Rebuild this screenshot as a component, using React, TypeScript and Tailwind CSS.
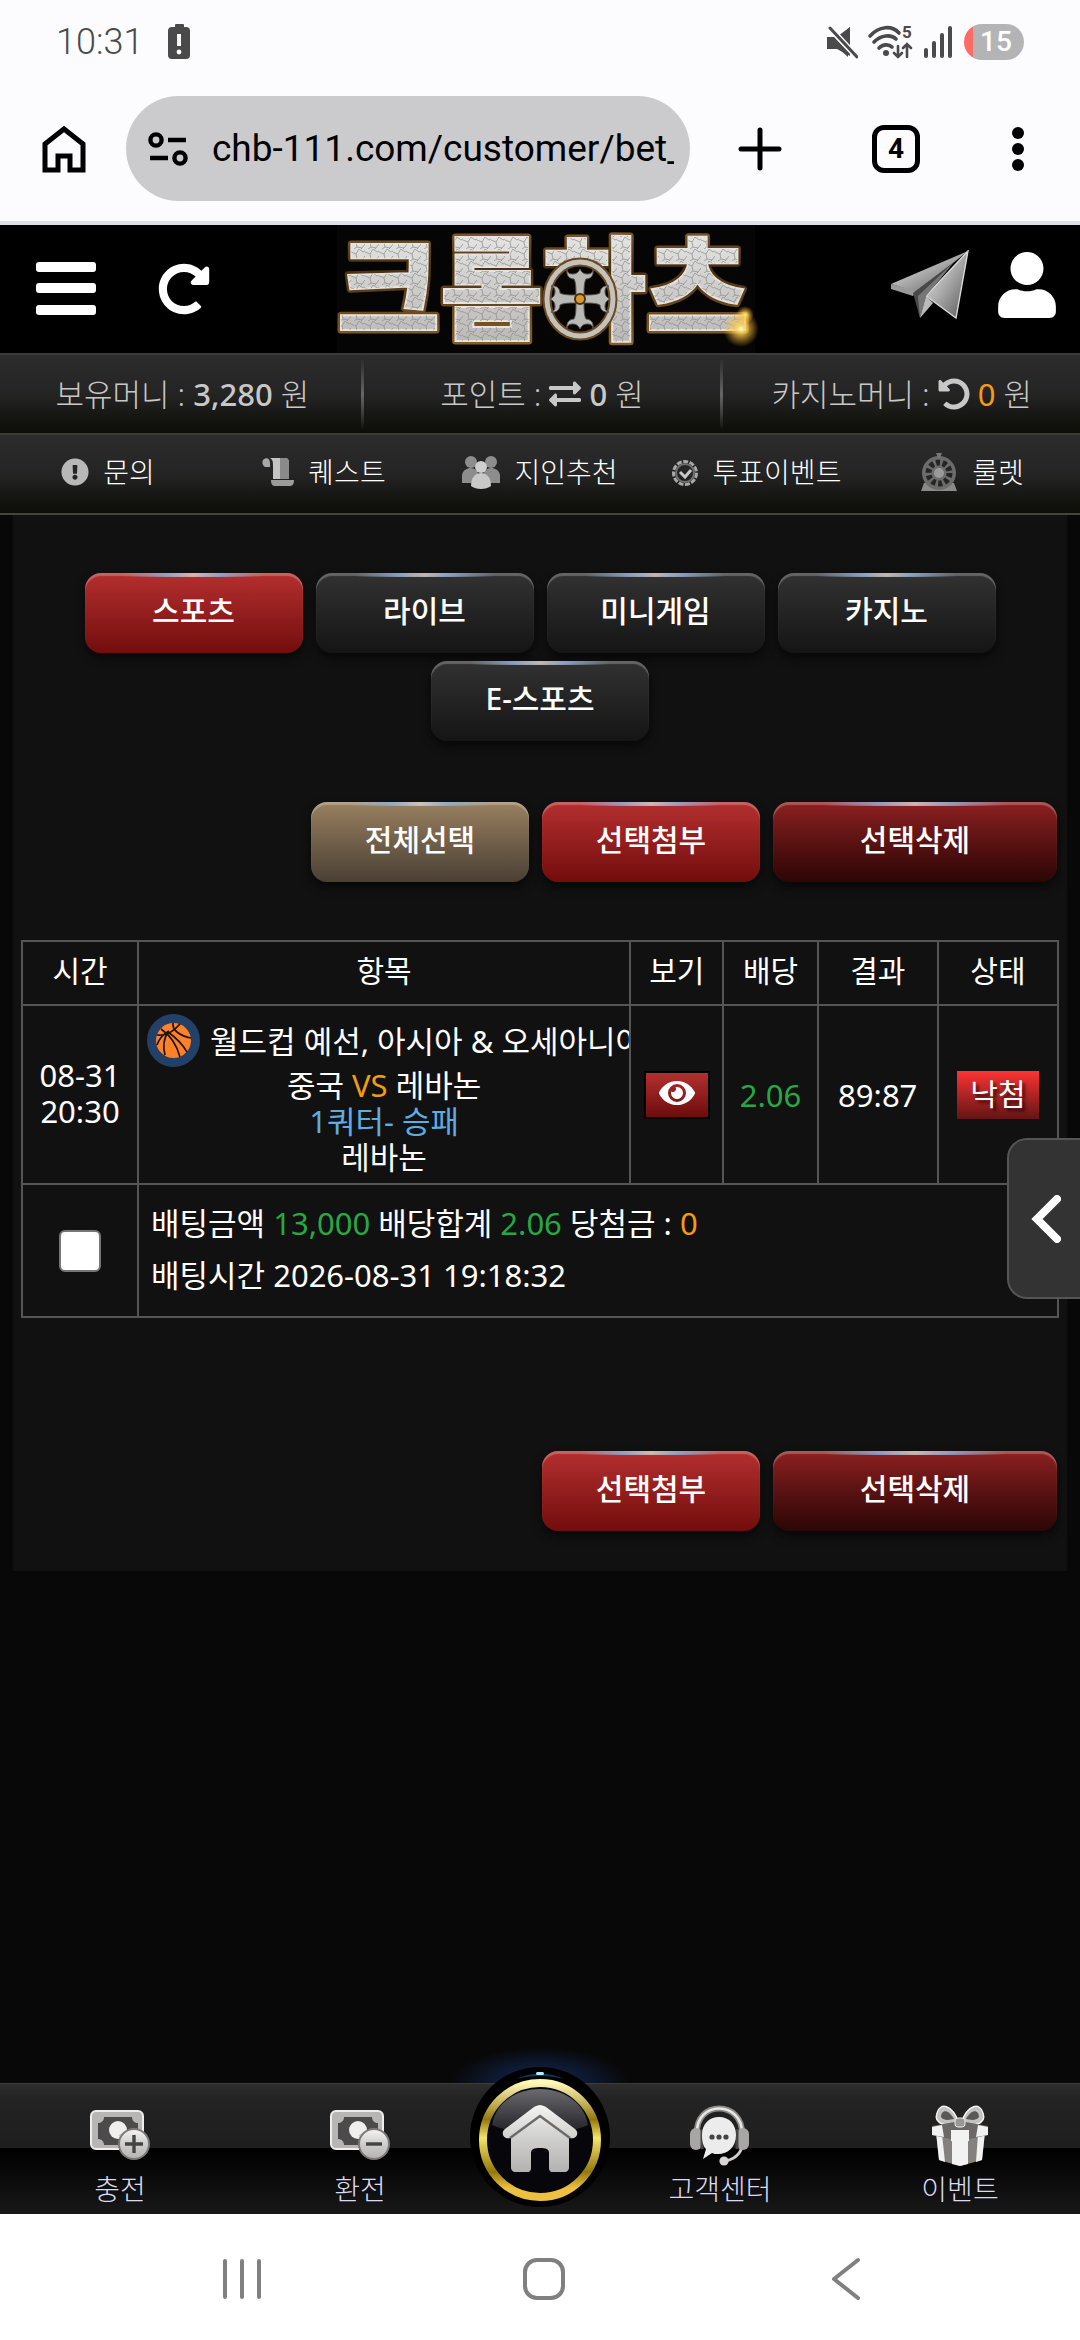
import type { ReactNode } from 'react'
import { FaExchangeAlt, FaExclamationCircle, FaEye, FaRedoAlt, FaUndoAlt, FaUser } from 'react-icons/fa'

const bar = 'border-t-2 border-[#3a3a38] bg-linear-to-b from-[#2c2c2c] via-[#242424] to-[#0c0d07]'

function StatusBar() {
  return (
    <div className="flex h-20 items-center justify-between pt-1 pr-14 pl-14 text-[#4a4a4a]">
      <div className="flex items-center gap-6">
        <span className="font-[Roboto] text-4xl">10:31</span>
        <svg className="h-9 w-6" viewBox="0 0 24 36" aria-hidden="true">
          <rect x="8" y="0" width="9" height="5" rx="1" fill="#4a4a4a" />
          <rect x="1" y="3" width="22" height="32" rx="4" fill="#4a4a4a" />
          <path d="M12 10v12" stroke="#fff" strokeWidth="4" />
          <circle cx="12" cy="28" r="2.4" fill="#fff" />
        </svg>
      </div>
      <div className="flex items-center gap-2.5">
        <svg className="h-9 w-8" viewBox="0 0 32 36" aria-hidden="true">
          <path d="M24 3v22L13 15zM2 13h6l16 16v3L11 25H2z" fill="#4a4a4a" />
          <path d="M24 3 12 12l12 12zM1 13h7l14 17v3l-9-8H1z" fill="#4a4a4a" />
          <path d="M4 4l27 29" stroke="#fcfcff" strokeWidth="6" />
          <path d="M4 4l27 29" stroke="#4a4a4a" strokeWidth="3" strokeLinecap="round" />
        </svg>
        <svg className="h-9 w-11 overflow-visible" viewBox="0 0 44 36" aria-hidden="true">
          <g fill="none" stroke="#4a4a4a" strokeWidth="3.6" strokeLinecap="round">
            <path d="M2 12c9-10 22-11 29-3" />
            <path d="M6 18c7-7 17-8 22-3" />
            <path d="M11 24c4-4 10-4 13-1" />
            <path d="M30 22v11m-4-4 4 4 4-4M39 33V20m-4 4 4-4 4 4" strokeWidth="2.6" />
          </g>
          <circle cx="18" cy="29" r="3" fill="#4a4a4a" />
          <text x="34" y="14" fontFamily="Roboto" fontSize="17" fontWeight="700" fill="#4a4a4a">5</text>
        </svg>
        <svg className="h-9 w-8" viewBox="0 0 32 36" aria-hidden="true">
          <path d="M4 26v6M12 19v13M20 11v21M28 4v28" stroke="#4a4a4a" strokeWidth="4" strokeLinecap="round" />
        </svg>
        <span className="flex h-9 w-15 items-center justify-center rounded-full bg-linear-to-r from-[#ff6b66] from-15% to-[#b4b4b6] to-15% pl-1 font-[Roboto] text-[28px] font-medium text-white">
          15
        </span>
      </div>
    </div>
  )
}

function BrowserBar() {
  return (
    <div className="flex h-[145px] items-center border-b-4 border-[#dfdfeb] pr-[54px] pb-1 pl-10">
      <button type="button" aria-label="홈">
        <svg className="h-12 w-12" viewBox="0 0 48 48" fill="none" stroke="#000" strokeWidth="5">
          <path d="M5 19 24 4l19 15v26H30V31H18v14H5z" />
        </svg>
      </button>
      <div className="ml-[38px] flex h-[105px] min-w-0 flex-1 items-center rounded-full bg-[#cbcbcd] pr-4 pl-[22px]">
        <svg className="h-10 w-10 shrink-0" viewBox="0 0 40 40" fill="none" stroke="#000" strokeWidth="4.4" aria-hidden="true">
          <circle cx="8" cy="11" r="5.6" />
          <path d="M20 11h18M2 29h18" />
          <circle cx="32" cy="29" r="5.6" />
        </svg>
        <input
          type="text"
          aria-label="주소"
          readOnly
          value="chb-111.com/customer/bet_"
          className="ml-6 w-full min-w-0 bg-transparent font-[Roboto] text-[37px] font-normal text-black outline-none"
        />
      </div>
      <div className="ml-12 flex w-72 items-center justify-between">
        <button type="button" aria-label="새 탭">
          <svg className="h-11 w-11" viewBox="0 0 44 44" stroke="#000" strokeWidth="5" strokeLinecap="round">
            <path d="M22 3v38M3 22h38" />
          </svg>
        </button>
        <button type="button" className="flex size-12 items-center justify-center rounded-xl border-5 border-black font-[Roboto] text-[28px] font-bold">
          4
        </button>
        <button type="button" aria-label="메뉴">
          <svg className="h-11 w-4" viewBox="0 0 16 44">
            <circle cx="8" cy="6" r="6" />
            <circle cx="8" cy="22" r="6" />
            <circle cx="8" cy="38" r="6" />
          </svg>
        </button>
      </div>
    </div>
  )
}

function Logo() {
  return (
    <svg className="h-32 w-[418px] overflow-visible" viewBox="0 0 418 128" role="img" aria-label="크롬하츠">
      <defs>
        <linearGradient id="silver" x1="0" y1="0" x2="0" y2="1">
          <stop offset="0" stopColor="#f4f4f2" />
          <stop offset=".5" stopColor="#cfcfcd" />
          <stop offset="1" stopColor="#b4b2b0" />
        </linearGradient>
        <linearGradient id="gilt" x1="0" y1="0" x2="0" y2="1">
          <stop offset="0" stopColor="#a87c3c" />
          <stop offset=".4" stopColor="#4a3010" />
          <stop offset="1" stopColor="#96682a" />
        </linearGradient>
        <radialGradient id="spark">
          <stop offset="0" stopColor="#fffbe0" />
          <stop offset=".2" stopColor="#ffd860" stopOpacity=".9" />
          <stop offset="1" stopColor="#ffb020" stopOpacity="0" />
        </radialGradient>
        <pattern id="crackle" width="14" height="12" patternUnits="userSpaceOnUse">
          <path d="M0 3l5 2 3-5M5 5l1 5 5 1 3-4M6 10l-3 2M11 11l-1 1M8 0l4 3 2-1" fill="none" stroke="#8c8a88" strokeWidth=".7" />
        </pattern>
      </defs>
      <rect width="418" height="128" fill="#050505" />
      <g fontFamily="'Noto Sans CJK KR', sans-serif" fontWeight="900" fontSize="112" textAnchor="middle">
        <text x="206" y="106" fill="none" stroke="url(#gilt)" strokeWidth="7" strokeLinejoin="round">크롬하츠</text>
        <text x="206" y="106" fill="url(#silver)" stroke="#e4e4e2" strokeWidth="2">크롬하츠</text>
        <text x="206" y="106" fill="url(#crackle)">크롬하츠</text>
      </g>
      {/* ring with the cross pattée */}
      <g transform="translate(243 74)">
        <ellipse rx="33" ry="37" fill="#080604" stroke="#6a4a1c" strokeWidth="9" />
        <ellipse rx="33" ry="37" fill="none" stroke="#c4c2be" strokeWidth="5" />
        {[0, 90, 180, 270].map((a) => (
          <path
            key={a}
            transform={`rotate(${a})`}
            d="M0-30c2 4 4 5 8 5 3 0 5-2 5-4 1 6-3 9-7 9-2 4-2 9-2 18h-8c0-9 0-14-2-18-4 0-8-3-7-9 0 2 2 4 5 4 4 0 6-1 8-5z"
            fill="#b9b9b5"
            stroke="#55524c"
            strokeWidth="1"
          />
        ))}
        <circle r="5" fill="#d99a2a" stroke="#4a2e0c" strokeWidth="2" />
      </g>
      <circle cx="408" cy="90" r="9" fill="url(#spark)" />
      <circle cx="404" cy="104" r="18" fill="url(#spark)" />
    </svg>
  )
}

function Header() {
  return (
    <header className="flex h-32 items-center bg-black">
      <div className="flex flex-1 items-center gap-[62px] pl-9 text-white">
        <button type="button" aria-label="메뉴 열기">
          <svg className="h-14 w-15" viewBox="0 0 60 56" fill="#fff">
            <rect y="1" width="60" height="10" rx="3" />
            <rect y="22" width="60" height="10" rx="3" />
            <rect y="44" width="60" height="10" rx="3" />
          </svg>
        </button>
        <button type="button" aria-label="새로고침">
          <FaRedoAlt className="size-[52px]" />
        </button>
      </div>
      <Logo />
      <div className="flex flex-1 items-center justify-end gap-7 pr-6 pb-2 text-white">
        <a href="#telegram" aria-label="텔레그램">
          <svg className="h-[70px] w-20" viewBox="0 0 80 70">
            <defs>
              <linearGradient id="wing" x1="0" y1="0" x2="1" y2="1">
                <stop offset="0" stopColor="#e8e8e8" />
                <stop offset=".45" stopColor="#b0b0b0" />
                <stop offset="1" stopColor="#555" />
              </linearGradient>
            </defs>
            <path d="M1 34 78 1 27 42z" fill="url(#wing)" />
            <path d="M1 34v5l22 7 4-5z" fill="#9a9a9a" />
            <path d="M23 43 64 12 33 50l-3 18z" fill="#484848" />
            <path d="M78 1 66 68 36 46z" fill="url(#wing)" stroke="#d8d8d8" strokeWidth="1.4" />
            <path d="M64 12 28 46l2 22 6-22z" fill="#777" />
            <path d="M30 68l6-22 7 7z" fill="#bbb" />
          </svg>
        </a>
        <a href="#mypage" aria-label="마이페이지">
          <FaUser className="h-[66px] w-[58px]" />
        </a>
      </div>
    </header>
  )
}

function Divider() {
  return <span className="h-[72px] w-[3px] bg-linear-to-b from-transparent via-[#666] to-transparent" />
}

function MoneyBar() {
  return (
    <div className={`flex h-20 items-center pl-1 text-[31px] text-[#c8c8c8] ${bar}`}>
      <p className="flex-1 text-center">
        보유머니 : <b className="font-medium">3,280</b> 원
      </p>
      <Divider />
      <p className="flex flex-1 items-center justify-center gap-2">
        포인트 :
        <FaExchangeAlt className="size-8" />
        <span>
          <b className="font-medium">0</b> 원
        </span>
      </p>
      <Divider />
      <p className="flex flex-1 items-center justify-center gap-2">
        카지노머니 :
        <FaUndoAlt className="size-8" />
        <span>
          <b className="font-normal text-[#f39c12]">0</b> 원
        </span>
      </p>
    </div>
  )
}

function QuestIcon() {
  return (
    <svg className="h-8 w-8" viewBox="0 0 32 32" aria-hidden="true">
      <path d="M1 4c3-3 7-2 7 3v4H3C0 9 0 6 1 4z" fill="#a8a8a8" />
      <path d="M8 2h15c3 0 4 2 4 5v16H11V10c0-4 0-6-3-8z" fill="#c4c4c4" />
      <path d="M18 2h5c3 0 4 2 4 5v16h-9z" fill="#8a8a8a" />
      <path d="M11 24h21c0 5-2 6-5 6H14c-4 0-5-2-5-6z" fill="#9c9c9c" />
    </svg>
  )
}

function FriendsIcon() {
  return (
    <svg className="h-9 w-[38px]" viewBox="0 0 38 36" aria-hidden="true">
      <g fill="#8d8d8d">
        <circle cx="9" cy="8" r="6" />
        <circle cx="29" cy="8" r="6" />
        <path d="M0 29V21c1-5 5-7 9-7s7 3 8 8v7zM21 29v-7c1-5 4-8 8-8s8 2 9 7v8z" />
      </g>
      <circle cx="19" cy="13" r="6" fill="#cfcfcf" />
      <path d="M9 32c0-8 4-13 10-13s10 5 10 13c-5 4-15 4-20 0z" fill="#c9c9c9" />
    </svg>
  )
}

function VoteIcon() {
  return (
    <svg className="h-8 w-7" viewBox="0 0 28 32" fill="none" aria-hidden="true">
      <circle cx="14" cy="17" r="11.5" stroke="#a8a8a8" strokeWidth="3" strokeDasharray="5 1.5" />
      <circle cx="14" cy="17" r="9" stroke="#707070" strokeWidth="2" />
      <path d="M9 16l5 5 6-7" stroke="#c8c8c8" strokeWidth="3" />
    </svg>
  )
}

function RouletteIcon() {
  return (
    <svg className="size-[38px]" viewBox="0 0 38 38" aria-hidden="true">
      <path d="M4 30h30l3 8H1z" fill="#8a8a8a" />
      <circle cx="19" cy="20" r="17" fill="#6c6c6c" />
      <circle cx="19" cy="20" r="10.5" fill="none" stroke="#252525" strokeWidth="6" strokeDasharray="4 2.6" />
      <circle cx="19" cy="20" r="5" fill="#9a9a9a" />
      <path d="M16 0h6l-3 7z" fill="#777" />
    </svg>
  )
}

const quickLinks = [
  { label: '문의', icon: <FaExclamationCircle className="size-7 text-[#b8b8b8]" /> },
  { label: '퀘스트', icon: <QuestIcon /> },
  { label: '지인추천', icon: <FriendsIcon /> },
  { label: '투표이벤트', icon: <VoteIcon /> },
  { label: '룰렛', icon: <RouletteIcon /> },
]

function QuickNav() {
  return (
    <nav className={`grid h-[82px] grid-cols-5 border-b-2 border-b-[#444] ${bar}`}>
      {quickLinks.map((l) => (
        <a key={l.label} href="#" className="flex items-center justify-center gap-3.5 pb-1 text-[28px] text-white">
          {l.icon}
          {l.label}
        </a>
      ))}
    </nav>
  )
}

const tones = {
  red: 'from-[#b52f2f] to-[#730c0c]',
  dark: 'from-[#323232] to-[#151515]',
  gold: 'from-[#9a8160] to-[#4a4034]',
  wine: 'from-[#8e2020] to-[#2c0606]',
}

function GlossButton({ tone, wide, children }: { tone: keyof typeof tones; wide?: boolean; children: ReactNode }) {
  return (
    <button
      type="button"
      className={`relative h-20 overflow-hidden rounded-2xl bg-linear-to-b pb-1 text-3xl font-medium text-white shadow-[0_5px_10px_rgba(0,0,0,0.6),inset_0_3px_1px_rgba(255,255,255,0.25)] before:absolute before:inset-x-[18%] before:top-0 before:h-1 before:bg-[linear-gradient(90deg,transparent,#8fabd0_30%,#d8ccc8_50%,#8fabd0_70%,transparent)] before:opacity-80 ${wide ? 'w-[284px]' : 'w-[218px]'} ${tones[tone]}`}
    >
      {children}
    </button>
  )
}

function Basketball() {
  return (
    <svg className="size-[53px] shrink-0" viewBox="0 0 53 53" aria-hidden="true">
      <circle cx="26.5" cy="26.5" r="26.5" fill="#234069" />
      <circle cx="26.5" cy="26.5" r="17.5" fill="#ff8128" />
      <g fill="none" stroke="#1c1512" strokeWidth="1.7">
        <path d="M10 21c9 1 17-4 23-11M14 15c9 6 16 17 19 28M26 9c-1 8 8 13 18 15M21 18c7 5 15 13 19 20M10 31c2-6 6-11 12-14M18 41c-2-8-1-17 3-23" />
      </g>
    </svg>
  )
}

const tabs = ['스포츠', '라이브', '미니게임', '카지노', 'E-스포츠']
const cell = 'border-2 border-[#555] text-center font-normal'

function BetTable() {
  return (
    <table className="w-full table-fixed border-collapse text-[31px] text-white">
      <colgroup>
        <col className="w-[11.2%]" />
        <col />
        <col className="w-[9%]" />
        <col className="w-[9.1%]" />
        <col className="w-[11.6%]" />
        <col className="w-[11.6%]" />
      </colgroup>
      <thead>
        <tr className="h-16">
          {['시간', '항목', '보기', '배당', '결과', '상태'].map((h) => (
            <th key={h} scope="col" className={`${cell} pb-1 text-3xl`}>{h}</th>
          ))}
        </tr>
      </thead>
      <tbody>
        <tr className="h-[179px] leading-9">
          <td className={`${cell} pb-1`}>
            08-31
            <br />
            20:30
          </td>
          <td className={`${cell} overflow-hidden`}>
            <div className="flex items-center gap-2.5 pl-2 whitespace-nowrap">
              <Basketball />
              <span>월드컵 예선, 아시아 &amp; 오세아니아</span>
            </div>
            <p>
              중국 <span className="text-[#f39c12]">VS</span> 레바논
            </p>
            <p className="text-[#5dade2]">1쿼터- 승패</p>
            <p>레바논</p>
          </td>
          <td className={cell}>
            <button
              type="button"
              aria-label="보기"
              className="mx-auto flex h-12 w-[66px] items-center justify-center border-2 border-black bg-linear-to-b from-[#b52f2f] to-[#6d0c0c] pb-1"
            >
              <FaEye className="size-9" />
            </button>
          </td>
          <td className={`${cell} text-[#28a745]`}>2.06</td>
          <td className={cell}>89:87</td>
          <td className={cell}>
            <span className="mx-auto flex h-12 w-[82px] items-center justify-center bg-linear-to-b from-[#ff3333] to-[#661414] pb-0.5 text-3xl text-shadow-[3px_3px_3px_rgba(0,0,0,0.6)]">
              낙첨
            </span>
          </td>
        </tr>
        <tr className="h-[133px] leading-[52px]">
          <td className={cell}>
            <input type="checkbox" aria-label="배팅 선택" className="mx-auto block size-[42px] appearance-none rounded-md border-2 border-[#767676] bg-white" />
          </td>
          <td colSpan={5} className="border-2 border-[#555] pb-1 pl-3 font-normal">
            <p>
              배팅금액 <span className="text-[#28a745]">13,000</span> 배당합계 <span className="text-[#28a745]">2.06</span> 당첨금 :{' '}
              <span className="text-[#f39c12]">0</span>
            </p>
            <p>배팅시간 2026-08-31 19:18:32</p>
          </td>
        </tr>
      </tbody>
    </table>
  )
}

function MoneyIcon({ sign }: { sign: string }) {
  return (
    <svg className="h-[50px] w-15" viewBox="0 0 60 50" aria-hidden="true">
      <rect x="1" y="1" width="52" height="38" rx="5" fill="#b8b6b4" stroke="#eee" strokeWidth="2" />
      <path d="M14 7h28c0 4 3 6 6 6v16c-4 0-6 2-6 6H14c0-4-3-6-6-6V13c3 0 6-2 6-6z" fill="#4c4a4a" />
      <circle cx="28" cy="20" r="9" fill="#f0efee" />
      <path d="M30 28l6-4" stroke="#ccc" strokeWidth="6" />
      <circle cx="44" cy="34" r="15" fill="url(#silver)" stroke="#7c7a78" strokeWidth="2" />
      <path d={sign} stroke="#444" strokeWidth="3.4" />
    </svg>
  )
}

function SupportIcon() {
  return (
    <svg className="h-[62px] w-[62px]" viewBox="0 0 62 62" fill="none" aria-hidden="true">
      <path d="M8 30C6-4 54-4 53 30" stroke="#8c8a88" strokeWidth="6" />
      <path d="M8 30C6-4 54-4 53 30" stroke="#e8e6e4" strokeWidth="2.6" />
      <path d="M54 38c-1 12-9 17-17 19" stroke="#d0cecc" strokeWidth="3" />
      <rect x="1" y="24" width="12" height="22" rx="6" fill="#a8a6a4" />
      <rect x="48" y="24" width="12" height="22" rx="6" fill="#a8a6a4" />
      <path d="M13 25v20M48 25v20" stroke="#444" strokeWidth="3" />
      <path d="M30 13c11 0 17 8 17 18 0 12-8 19-18 19-3 0-4 0-6-1l-9 6 3-10c-3-3-4-8-4-14 0-11 7-18 17-18z" fill="#ececec" />
      <g fill="#444">
        <circle cx="23" cy="33" r="2.6" />
        <circle cx="30" cy="33" r="2.6" />
        <circle cx="37" cy="33" r="2.6" />
      </g>
      <circle cx="35" cy="57" r="4.6" fill="#d8d6d4" />
    </svg>
  )
}

function GiftIcon() {
  return (
    <svg className="h-[62px] w-14" viewBox="0 0 56 62" aria-hidden="true">
      <path d="M27 19C20 0 8-2 5 9 1 20 16 24 27 19zM29 19C36 0 48-2 51 9c4 11-11 15-22 10z" fill="#c4c2c0" stroke="#f4f4f4" strokeWidth="1.4" />
      <path d="M22 15C16 4 9 6 9 13c3 4 8 3 13 2zM34 15C40 4 47 6 47 13c-3 4-8 3-13 2z" fill="#5a5856" />
      <path d="M4 28l24 7 25-7-3 28-22 6-21-6z" fill="#85817d" />
      <path d="M4 28l6 2 3 28-6-2zM20 33h16v27l-8 2-8-2zM46 30l7-2-3 28-6 2z" fill="#f2f2f2" />
      <path d="M0 22l28-5 28 5v9l-28 6-28-6z" fill="#6c6865" />
      <path d="M0 23l10-2 2 12-12-2zM19 26h18v11l-9 2-9-2zM56 23l-10-2-2 12 12-2z" fill="#f2f2f2" />
      <rect x="23" y="14" width="10" height="9" rx="3" fill="#9a9896" stroke="#eee" />
    </svg>
  )
}

function HomeBadge() {
  return (
    <a href="#home" aria-label="홈" className="absolute -top-4 left-1/2 -translate-x-1/2">
      <span className="absolute -inset-x-5 -top-5 -z-10 h-9 bg-[radial-gradient(ellipse_at_bottom,#142c60,transparent_70%)]" />
      <svg className="size-[140px]" viewBox="0 0 140 140">
        <defs>
          <linearGradient id="ring" x1="0" y1="0" x2="0" y2="1">
            <stop offset="0" stopColor="#fff8b8" />
            <stop offset=".32" stopColor="#94780c" />
            <stop offset=".48" stopColor="#f4e468" />
            <stop offset=".78" stopColor="#94780c" />
            <stop offset=".92" stopColor="#ecc040" />
          </linearGradient>
          <linearGradient id="gloss" x1="0" y1="0" x2="0" y2="1">
            <stop offset="0" stopColor="#6a6a6e" />
            <stop offset="1" stopColor="#222226" />
          </linearGradient>
        </defs>
        <circle cx="70" cy="70" r="70" fill="#000" />
        <path d="M46 12c14-7 34-7 48 0-14-4-34-4-48 0z" fill="#0c3a5c" />
        <rect x="66" y="5" width="8" height="3" rx="1.5" fill="#b8ecff" />
        <circle cx="70" cy="73" r="57" fill="#07070b" stroke="url(#ring)" strokeWidth="8" />
        <path d="M22 58C30 10 110 10 118 58c-18 10-78 10-96 0z" fill="url(#gloss)" />
        <path d="M70 38c2 0 4 1 6 2l29 22c5 4 1 11-5 9l-1-1v31c0 2-2 4-4 4H82c-2 0-3-2-3-4V86c0-4-3-5-9-5s-9 1-9 5v15c0 2-1 4-3 4H45c-2 0-4-2-4-4V70l-1 1c-6 2-10-5-5-9l29-22c2-1 4-2 6-2z" fill="url(#silver)" />
        <path d="M40 71 70 49l30 22" fill="none" stroke="#6d6b6a" strokeWidth="2.4" />
      </svg>
    </a>
  )
}

function TabLink({ label, children }: { label: string; children: ReactNode }) {
  return (
    <a href="#" className="flex flex-col items-center text-[28px] leading-11 text-[#dadaf2]">
      <span className="flex h-16 items-center justify-center">{children}</span>
      {label}
    </a>
  )
}

function BottomNav() {
  return (
    <nav className="relative isolate grid h-[131px] grid-cols-[2fr_2fr_1fr_2fr_2fr] bg-[linear-gradient(#2e2e2e,#232323_12%,#1e1e1e_50%,#000_50%,#181818)] pt-5 shadow-[inset_0_1px_0_#3c3c3c]">
      <TabLink label="충전">
        <MoneyIcon sign="M35 34h18M44 25v18" />
      </TabLink>
      <TabLink label="환전">
        <MoneyIcon sign="M36 34h16" />
      </TabLink>
      <span />
      <TabLink label="고객센터">
        <SupportIcon />
      </TabLink>
      <TabLink label="이벤트">
        <GiftIcon />
      </TabLink>
      <HomeBadge />
    </nav>
  )
}

function SystemNav() {
  return (
    <div className="flex h-[126px] items-center justify-center gap-[258px] bg-white pt-1 pl-2">
      <button type="button" aria-label="최근 앱">
        <svg className="h-11 w-11" viewBox="0 0 44 44" stroke="#808080" strokeWidth="4" strokeLinecap="round">
          <path d="M5 4v36M22 4v36M39 4v36" />
        </svg>
      </button>
      <button type="button" aria-label="시스템 홈">
        <svg className="h-11 w-11" viewBox="0 0 44 44" fill="none" stroke="#808080" strokeWidth="4">
          <rect x="3" y="3" width="38" height="38" rx="12" />
        </svg>
      </button>
      <button type="button" aria-label="뒤로">
        <svg className="h-11 w-11" viewBox="0 0 44 44" fill="none" stroke="#808080" strokeWidth="4" strokeLinecap="round" strokeLinejoin="round">
          <path d="M34 3 10 22l24 19" />
        </svg>
      </button>
    </div>
  )
}

export default function App() {
  return (
    <div className="relative flex min-h-screen flex-col bg-[#080808] font-['Noto_Sans','Noto_Sans_CJK_KR',sans-serif] font-light">
      <div className="bg-[#fcfcff]">
        <StatusBar />
        <BrowserBar />
      </div>
      <Header />
      <MoneyBar />
      <QuickNav />

      <main className="flex-1">
        <div className="mx-[13px] bg-[#111] px-2 pt-[58px] pb-10">
          <div className="flex flex-wrap justify-center gap-x-[13px] gap-y-2 px-12">
            {tabs.map((t, i) => (
              <GlossButton key={t} tone={i === 0 ? 'red' : 'dark'}>{t}</GlossButton>
            ))}
          </div>

          <div className="mt-[61px] flex justify-end gap-[13px] pr-0.5">
            <GlossButton tone="gold">전체선택</GlossButton>
            <GlossButton tone="red">선택첨부</GlossButton>
            <GlossButton tone="wine" wide>선택삭제</GlossButton>
          </div>

          <div className="mt-[58px]">
            <BetTable />
          </div>

          <div className="mt-[133px] flex justify-end gap-[13px] pr-0.5">
            <GlossButton tone="red">선택첨부</GlossButton>
            <GlossButton tone="wine" wide>선택삭제</GlossButton>
          </div>
        </div>
      </main>

      <BottomNav />
      <SystemNav />

      <button
        type="button"
        aria-label="사이드 메뉴"
        className="absolute top-[1138px] right-0 flex h-[161px] w-[73px] items-center justify-center rounded-l-[20px] border-2 border-r-0 border-[#555] bg-[#333]"
      >
        <svg className="h-12 w-8" viewBox="0 0 32 48" fill="none" stroke="#fff" strokeWidth="8">
          <path d="M28 4 8 24l20 20" strokeLinecap="round" />
        </svg>
      </button>
    </div>
  )
}
